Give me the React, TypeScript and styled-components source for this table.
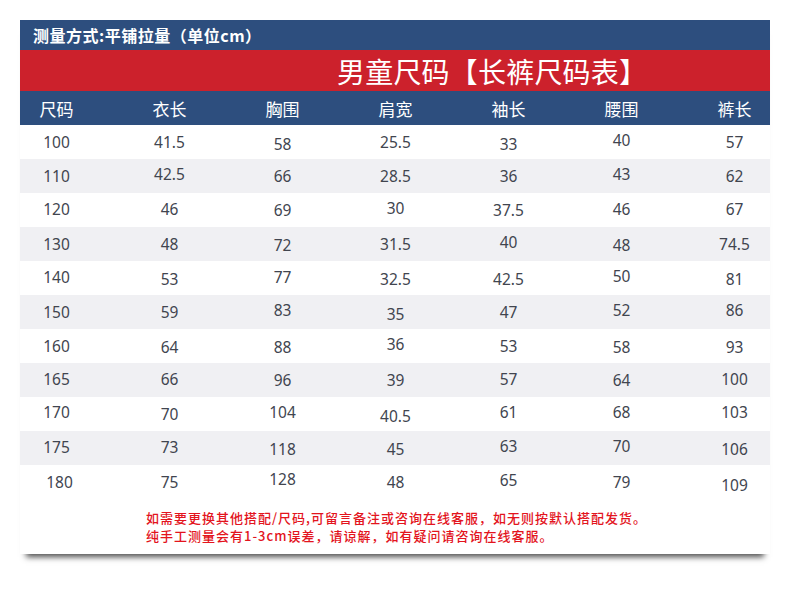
import React from "react";
import styled, { createGlobalStyle } from "styled-components";

const GlobalStyle = createGlobalStyle`
  html, body { margin: 0; padding: 0; background: #ffffff; }
  body { font-family: "Noto Sans", "Noto Sans CJK SC", sans-serif; }
`;

const BLUE = "#2d4e7e";
const RED = "#cc212c";
const CJK = `"Noto Sans CJK SC", "Noto Sans", sans-serif`;

const Page = styled.div`
  width: 790px;
  height: 611px;
  padding-top: 20px;
  box-sizing: border-box;
  background: #ffffff;
`;

const Card = styled.section`
  margin: 0 20px;
  width: 750px;
  background: #ffffff;
  box-shadow: 0 9px 6px -6px rgba(0, 0, 0, 0.7);
  padding-bottom: 9px;
`;

const TopBar = styled.div`
  height: 30px;
  background: ${BLUE};
  display: flex;
  align-items: center;
  padding-left: 13px;
  color: #ffffff;
  font-family: ${CJK};
  font-weight: 700;
  font-size: 16px;
  letter-spacing: 0.5px;
`;

const TitleBar = styled.div`
  height: 41px;
  background: ${RED};
  display: flex;
  align-items: center;
  padding-left: 317px;
  color: #ffffff;
  font-family: ${CJK};
  font-weight: 400;
  font-size: 28px;
  letter-spacing: 0.2px;
`;

const Row = styled.div<{ $head?: boolean; $alt?: boolean }>`
  display: grid;
  grid-template-columns: 93px repeat(5, 113px) 92px;
  height: 34px;
  align-items: center;
  background: ${(p) => (p.$head ? BLUE : p.$alt ? "#f0f0f3" : "#ffffff")};
  color: ${(p) => (p.$head ? "#ffffff" : "#41454f")};
  font-family: ${(p) => (p.$head ? CJK : `"Noto Sans", sans-serif`)};
  font-size: ${(p) => (p.$head ? "17px" : "15.5px")};
`;

const Cell = styled.div<{ $dy?: number; $dx?: number }>`
  text-align: center;
  position: relative;
  top: ${(p) => p.$dy ?? 0}px;
  left: ${(p) => p.$dx ?? 0}px;
  &:first-child { padding-right: 20px; }
  &:last-child { padding-left: 21px; }
`;

const Note = styled.div`
  padding: 10px 0 0 126px;
  color: #e3141d;
  font-family: ${CJK};
  font-weight: 500;
  font-size: 13px;
  letter-spacing: 1px;
`;

const NoteLine = styled.p`
  margin: 0;
  height: 18px;
  line-height: 18px;
`;

const headers = ["尺码", "衣长", "胸围", "肩宽", "袖长", "腰围", "裤长"];

const rows: string[][] = [
  ["100", "41.5", "58", "25.5", "33", "40", "57"],
  ["110", "42.5", "66", "28.5", "36", "43", "62"],
  ["120", "46", "69", "30", "37.5", "46", "67"],
  ["130", "48", "72", "31.5", "40", "48", "74.5"],
  ["140", "53", "77", "32.5", "42.5", "50", "81"],
  ["150", "59", "83", "35", "47", "52", "86"],
  ["160", "64", "88", "36", "53", "58", "93"],
  ["165", "66", "96", "39", "57", "64", "100"],
  ["170", "70", "104", "40.5", "61", "68", "103"],
  ["175", "73", "118", "45", "63", "70", "106"],
  ["180", "75", "128", "48", "65", "79", "109"],
];

const offsets: number[][] = [
  [0, 0, 2, 0, 2, -2, 0],
  [0, -2, 0, 0, 0, -2, 0],
  [-1, -1, 0, -2, 0, -1, -1],
  [0, 0, 1, 0, -2, 1, 0],
  [-1, 1, -1, 1, 1, -2, 1],
  [0, 0, -2, 2, 0, -2, -2],
  [0, 1, 1, -2, 0, 1, 1],
  [-1, -1, 0, 0, -1, 0, -1],
  [-2, 0, -2, 2, -2, -2, -2],
  [-1, -1, 1, 1, -2, -2, 1],
  [0, 0, -3, 0, -2, 0, 3],
];

export default function App() {
  return (
    <Page>
      <GlobalStyle />
      <Card>
        <TopBar>测量方式:平铺拉量（单位cm）</TopBar>
        <TitleBar>男童尺码【长裤尺码表】</TitleBar>
        <Row $head>
          {headers.map((h) => (
            <Cell key={h}>{h}</Cell>
          ))}
        </Row>
        {rows.map((r, i) => (
          <Row key={r[0]} $alt={i % 2 === 1}>
            {r.map((v, j) => (
              <Cell key={j} $dy={offsets[i][j]} $dx={i === 10 && j === 0 ? 3 : 0}>
                {v}
              </Cell>
            ))}
          </Row>
        ))}
        <Note>
          <NoteLine>如需要更换其他搭配/尺码,可留言备注或咨询在线客服，如无则按默认搭配发货。</NoteLine>
          <NoteLine>纯手工测量会有1-3cm误差，请谅解，如有疑问请咨询在线客服。</NoteLine>
        </Note>
      </Card>
    </Page>
  );
}
